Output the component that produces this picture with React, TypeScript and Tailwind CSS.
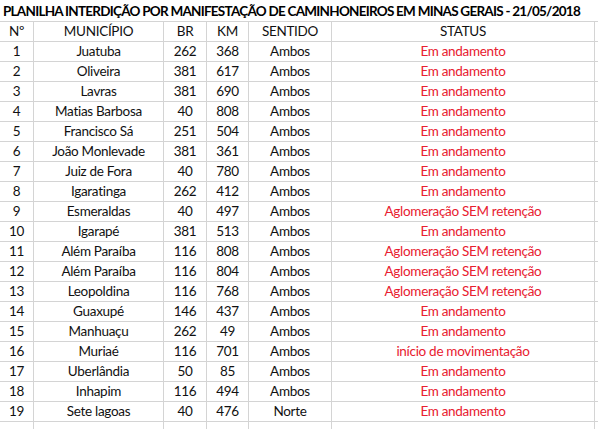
const rows: [string, string, string, string, string, string][] = [
  ['1', 'Juatuba', '262', '368', 'Ambos', 'Em andamento'],
  ['2', 'Oliveira', '381', '617', 'Ambos', 'Em andamento'],
  ['3', 'Lavras', '381', '690', 'Ambos', 'Em andamento'],
  ['4', 'Matias Barbosa', '40', '808', 'Ambos', 'Em andamento'],
  ['5', 'Francisco Sá', '251', '504', 'Ambos', 'Em andamento'],
  ['6', 'João Monlevade', '381', '361', 'Ambos', 'Em andamento'],
  ['7', 'Juiz de Fora', '40', '780', 'Ambos', 'Em andamento'],
  ['8', 'Igaratinga', '262', '412', 'Ambos', 'Em andamento'],
  ['9', 'Esmeraldas', '40', '497', 'Ambos', 'Aglomeração SEM retenção'],
  ['10', 'Igarapé', '381', '513', 'Ambos', 'Em andamento'],
  ['11', 'Além Paraíba', '116', '808', 'Ambos', 'Aglomeração SEM retenção'],
  ['12', 'Além Paraíba', '116', '804', 'Ambos', 'Aglomeração SEM retenção'],
  ['13', 'Leopoldina', '116', '768', 'Ambos', 'Aglomeração SEM retenção'],
  ['14', 'Guaxupé', '146', '437', 'Ambos', 'Em andamento'],
  ['15', 'Manhuaçu', '262', '49', 'Ambos', 'Em andamento'],
  ['16', 'Muriaé', '116', '701', 'Ambos', 'início de movimentação'],
  ['17', 'Uberlândia', '50', '85', 'Ambos', 'Em andamento'],
  ['18', 'Inhapim', '116', '494', 'Ambos', 'Em andamento'],
  ['19', 'Sete lagoas', '40', '476', 'Norte', 'Em andamento'],
];

const cols = 'grid grid-cols-[34px_130px_43px_42px_83px_263px_1fr]';
const cell = 'flex items-center justify-center border-r border-b border-[#d4d4d4] h-[20px] pt-[1px] whitespace-nowrap';

function Row({ values, red }: { values: string[]; red?: boolean }) {
  return (
    <div className={cols}>
      {values.map((v, i) => (
        <div key={i} className={`${cell} ${i === 5 && red ? 'text-[#e8202f]' : 'text-[#111]'}`}>
          {v}
        </div>
      ))}
      <div className="border-b border-[#d4d4d4] h-[20px]" />
    </div>
  );
}

export default function App() {
  return (
    <div
      className="w-[598px] h-[429px] overflow-hidden bg-white text-[13.5px] tracking-[-0.3px] leading-none"
      style={{ fontFamily: 'Lato, "Liberation Sans", sans-serif' }}
    >
      <div className="h-[22px] border-b border-[#d4d4d4] flex items-center pl-[3px] pt-[2px] text-[13.5px] font-bold text-black whitespace-nowrap tracking-[-0.75px]">
        PLANILHA INTERDIÇÃO POR MANIFESTAÇÃO DE CAMINHONEIROS EM MINAS GERAIS - 21/05/2018
      </div>
      <Row values={['Nº', 'MUNICÍPIO', 'BR', 'KM', 'SENTIDO', 'STATUS']} />
      {rows.map((r) => (
        <Row key={r[0]} values={r} red />
      ))}
      <Row values={['', '', '', '', '', '']} />
    </div>
  );
}
